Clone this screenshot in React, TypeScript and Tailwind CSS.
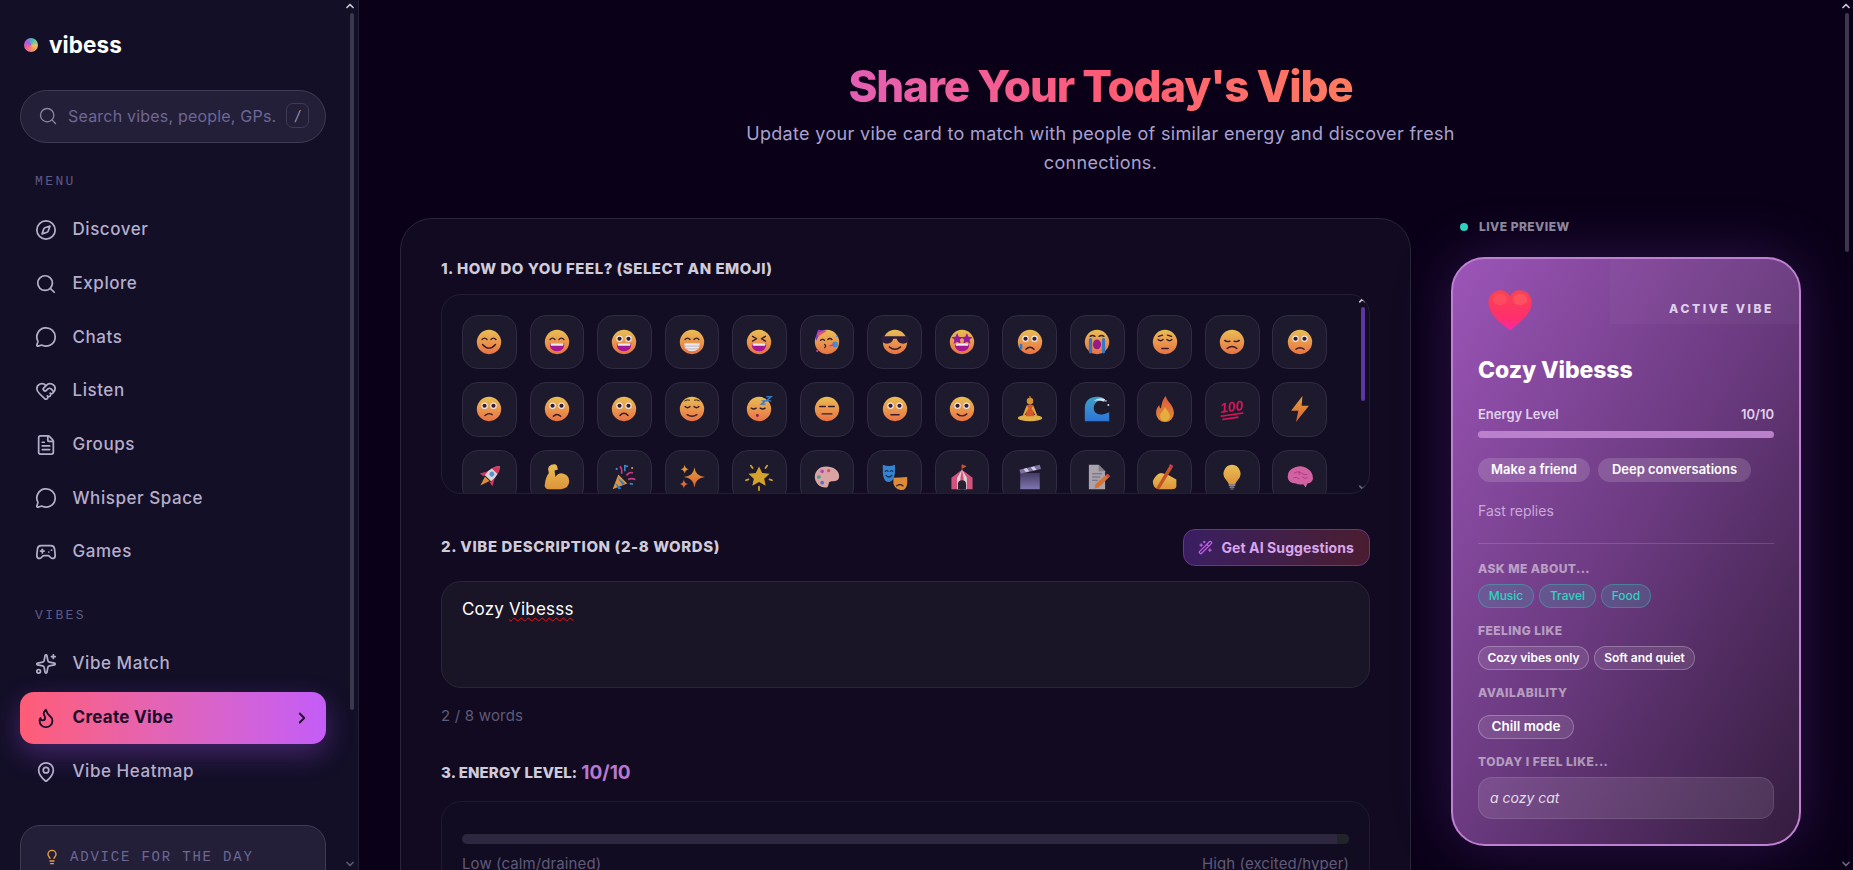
import React from "react";
import { Compass, Search, MessageCircle, HeartHandshake, FileText, Gamepad2, Sparkles, Flame, ChevronRight, ChevronUp, ChevronDown, MapPin, Lightbulb, WandSparkles } from "lucide-react";

const D = "#3a1c2c";
const S = (d: string, w = 1.7, c = D) => <path d={d} fill="none" stroke={c} strokeWidth={w} strokeLinecap="round" strokeLinejoin="round" />;
const happyEyes = S("M7.5 13q3-3.6 6 0M18.5 13q3-3.6 6 0");
const roundEyes = (<><circle cx="10.5" cy="12" r="4" fill="#fff" /><circle cx="21.5" cy="12" r="4" fill="#fff" /><circle cx="10.5" cy="12" r="2.6" fill={D} /><circle cx="21.5" cy="12" r="2.6" fill={D} /></>);
const open = (<><path d="M7 17.5h18q0 10-9 10t-9-10z" fill="#b5179e" /><path d="M8 17.5h16q0 2-.6 3.2h-14.800q-.6-1.200-.6-3.200z" fill="#fff" /></>);
const frown = S("M11 24q5-5.500 10 0");
const Face = ({ children }: { children: React.ReactNode }) => (<><circle cx="16" cy="16" r="15" fill="url(#faceG)" />{children}</>);

const EMOJI: Record<string, React.ReactNode> = {
  smile: <Face>{happyEyes}{S("M8 19q8 9 16 0")}</Face>,
  grin: <Face>{happyEyes}{open}</Face>,
  big: <Face>{roundEyes}{open}</Face>,
  teeth: <Face>{happyEyes}<path d="M6.500 17.500h19q0 10-9.500 10t-9.500-10z" fill="#fff" />{S("M7 21h18M9 24.500h14", 0.8, "#c9a0b0")}</Face>,
  squint: <Face>{S("M8 9l5 3-5 3M24 9l-5 3 5 3")}{open}</Face>,
  party: <Face><path d="M2 10L5 1l11 1C10 4 5 7 3 15z" fill="#8e44d8" /><path d="M4 5l8-3 3 1-10 6z" fill="#f2557e" />{S("M8 14q2.500-2.500 5 0M17 13q2.500-2.500 5 0")}{S("M13 23q3-2 0-4", 1.5)}<circle cx="26" cy="19" r="3.500" fill="#3aa0e8" /><path d="M19 21l6-2" stroke="#e74694" strokeWidth="2" /><circle cx="4" cy="27" r="1.300" fill="#e74694" /><circle cx="28" cy="9" r="1" fill="#3aa0e8" /></Face>,
  cool: <Face><path d="M-1 9h34v3q-1 6-7 6t-8-6h-4q-2 6-8 6t-7-6z" fill="#2d1f3f" />{S("M9 22q7 6 14 0")}</Face>,
  star: <Face><path d="M10 5l2 4.500 5 .5-3.700 3.300 1 4.900-4.300-2.500-4.300 2.500 1-4.900L3 10l5-.5zM22 5l2 4.500 5 .5-3.700 3.300 1 4.900-4.300-2.500-4.300 2.500 1-4.900-3.700-3.300 5-.5z" fill="#a21caf" />{open}</Face>,
  tear: <Face>{roundEyes}{S("M11 25q5-5 10 0")}<rect x="3.500" y="18" width="3" height="7" rx="1.500" fill="#2f7fe0" /></Face>,
  cry: <Face>{S("M7.500 9q3-2 6 0M18.500 9q3-2 6 0")}<rect x="6" y="11" width="4" height="19" rx="2" fill="#3a7fd8" /><rect x="22" y="11" width="4" height="19" rx="2" fill="#3a7fd8" /><ellipse cx="16" cy="19" rx="5" ry="6" fill="#a51a8f" /></Face>,
  pensive: <Face>{S("M8 9l5-1.500M24 9l-5-1.500")}{S("M7.500 13q3 3 6 0M18.500 13q3 3 6 0")}{S("M12 24h8")}</Face>,
  sad: <Face>{S("M7 14q3 2.500 6.500 1M25 14q-3 2.500-6.500 1")}{S("M10 24q6-5 12 0")}</Face>,
  worried: <Face>{roundEyes}{S("M11 25q5-4 10 0")}</Face>,
  confused: <Face>{roundEyes}{S("M11 24q5-4 9 -1")}</Face>,
  slightFrown: <Face>{roundEyes}{S("M11.500 25q4.500-4.500 9 0")}</Face>,
  frownFace: <Face>{roundEyes}{frown}</Face>,
  relieved: <Face>{S("M7 6q3-2 6-1M25 6q-3-2-6-1", 1.200)}{S("M7.500 13q3 3 6 0M18.500 13q3 3 6 0")}{S("M10 23q6 4 12 0")}</Face>,
  sleep: <Face>{S("M6.500 15q3 2 6 0M17.500 15q3 2 6 0")}<circle cx="14" cy="24" r="1.800" fill="#a5185f" /><path d="M19 6h5l-5 4h5M25 1h6l-6 5h6" fill="none" stroke="#3a86d8" strokeWidth="1.700" /></Face>,
  expressionless: <Face>{S("M7 13h7M18 13h7")}{S("M10 22h12")}</Face>,
  neutral: <Face>{roundEyes}{S("M11 23h10")}</Face>,
  slight: <Face>{roundEyes}{S("M10 22q6 5 12 0")}</Face>,
  yoga: (<><ellipse cx="16" cy="27" rx="15" ry="4" fill="#f7c04a" /><path d="M12.500 11q3.500-2 7 0l1.500 14H11z" fill="#e8602e" /><path d="M12 11.500L7 24l2 1 5-10zM20 11.500L25 24l-2 1-5-10z" fill="#f2b53f" /><circle cx="16" cy="6" r="4" fill="#e9a13a" /><circle cx="16" cy="1.300" r="1.300" fill="#b86a28" /></>),
  wave: (<><path d="M1 31V15C1 5 8 1 16 1c6 0 9 2 10 4-8-1-14 3-14 10 0 6 6 9 13 7 2 0 4-1 6-2v11z" fill="url(#waveG)" /><path d="M12 6q6-5 14-2l-1 3q-7-2-13-1z" fill="#f2f5fa" /><circle cx="27" cy="6" r="1" fill="#dfe8f5" /><circle cx="30" cy="11" r="1.200" fill="#dfe8f5" /></>),
  fire: (<><path d="M17 0c1 7 10 11 10 21a11 11 0 0 1-22 0c0-5 2-8 4-10 0 3 1 4 2 4 1-5 2-11 6-15z" fill="url(#fireG)" /><path d="M16 13c1 4 6 7 6 12a6 6 0 0 1-12 0c0-5 5-7 6-12z" fill="#fbbf3e" /></>),
  hundred: (<><text x="16" y="19" textAnchor="middle" fontFamily="Liberation Sans, sans-serif" fontWeight="900" fontStyle="italic" fontSize="17" fill="#f0145e" transform="rotate(-8 16 16)">100</text><path d="M2 25L30 21M4 29L24 26" stroke="#f0145e" strokeWidth="2" /></>),
  bolt: <path d="M19 0L5 18h9l-3 14 16-20h-9z" fill="url(#boltG)" />,
  rocket: (<g transform="rotate(45 16 16)"><path d="M16-3q7 8 6 21H10Q9 5 16-3z" fill="#ece7ee" /><path d="M16-3q4 4 5 9H11q1-5 5-9z" fill="#e83a63" /><circle cx="16" cy="11" r="3" fill="#5c9fdc" /><path d="M10 12l-5 9 6-1zM22 12l5 9-6-1z" fill="#e83a63" /><path d="M12 19h8l-4 12z" fill="#f1993b" /></g>),
  muscle: <path d="M9 1q5-2 7 1l1 5-4 1 1 8q4-6 10-4 7 2 7 9 0 9-10 10H5q-5-1-4-6 1-9 5-14L5 6q0-3 4-5z" fill="url(#bulbG)" />,
  tada: (<><path d="M2 31L9 13l11 11z" fill="#f1a33c" /><path d="M5 23l8 7-4 1zM8 16l9 8-3 2z" fill="#3a86d8" /><path d="M13 12q1-6-2-9M19 14q4-5 8-3M21 19q4-2 9 0" fill="none" stroke="#e83a90" strokeWidth="2" /><path d="M17 9V2l4 1" fill="none" stroke="#3aa0e8" strokeWidth="1.800" /><circle cx="26" cy="5" r="1.300" fill="#f1a33c" /><circle cx="7" cy="6" r="1.300" fill="#3aa0e8" /><path d="M23 24l4 1" stroke="#3aa0e8" strokeWidth="2" /></>),
  sparkles: <path d="M19 4q1 11 13 12-12 1-13 13-1-12-13-13 12-1 13-12zM7 1q.7 5 5 5.500-4.300.7-5 5.500-.7-4.800-5-5.500 4.300-.5 5-5.500zM6 19q.7 5 5 5.500-4.300.7-5 5.500-.7-4.800-5-5.500 4.300-.5 5-5.500z" fill="url(#boltG)" />,
  glow: (<><path d="M16 3l4 8 9 1-6.600 6 1.800 8.800-8.200-4.500-8.200 4.500 1.800-8.800L3 12l9-1z" fill="#e9b22c" /><path d="M16 28v4M6 2l2 3M26 2l-2 3M0 20l3-1M32 20l-3-1" stroke="#e9b22c" strokeWidth="2.200" strokeLinecap="round" /></>),
  palette: (<><path d="M15 3C6 3 1 9 1 16s6 13 13 13c5 0 3-5 5-7 3-2 12 1 12-7C31 8 24 3 15 3z" fill="#eeb3ae" /><circle cx="10" cy="9" r="2.300" fill="#c94fd0" /><circle cx="6" cy="16" r="2.300" fill="#3cb4a2" /><circle cx="10" cy="23" r="2.300" fill="#4f7fe0" /><circle cx="18" cy="8" r="2" fill="#e0557a" /></>),
  masks: (<><path d="M1 1q8 3 15 0v10q-2 11-8 11T1 11z" fill="#3a8fe0" />{S("M4 9q2-2 3.500 0M10 9q2-2 3.500 0", 1.400, "#123060")}{S("M5 14q3.500 4 7 0", 1.600, "#123060")}<path d="M14 17q8 0 17-1v8q-1 9-8 8t-9-8z" fill="#f1993b" />{S("M18 27q4-3 8 0", 1.500)}</>),
  circus: (<><path d="M16 7L3 17v14h26V17z" fill="#e65a85" /><path d="M16 7l-6 10v14h4V17zM16 7l6 10v14h-4V17z" fill="#f2e6ea" /><path d="M11 31v-6a5 5 0 0 1 10 0v6z" fill="#2a2233" /><path d="M16 8V1l5 2-5 2" fill="#e65a2c" stroke="#e65a2c" /></>),
  clapper: (<><rect x="4" y="11" width="24" height="20" fill="url(#clapG)" /><path d="M3 7l25-6 1.500 5-25 6z" fill="#8a7ab0" /><path d="M8 6l3 4 4-1-3-4zM17 4l3 4 4-1-3-4z" fill="#e8e4f0" /></>),
  memo: (<><path d="M6 1h12l8 8v22H6z" fill="#b9b2bc" /><path d="M18 1l8 8h-8z" fill="#8e8892" /><path d="M10 12h12M10 16h10M10 20h7" stroke="#78727e" strokeWidth="1.300" /><path d="M29 12l3 3-14 14-5 1 1-5z" fill="#ee7c30" /><path d="M29 12l3 3-2 2-3-3z" fill="#e0475a" /></>),
  writing: (<><path d="M1 21q4-9 10-10l8 2 11 6v8q0 4-6 4H8q-7-1-7-10z" fill="url(#bulbG)" /><path d="M5 30L21 3l4 2L9 31z" fill="#d65a2a" /><path d="M21 3l1-3 4 2-1 3z" fill="#e0475a" /></>),
  bulb: (<><path d="M16 1a11 11 0 0 0-7 19q3 3 3 5h8q0-2 3-5a11 11 0 0 0-7-19z" fill="url(#bulbG)" /><rect x="12" y="25" width="8" height="2" fill="#a8a3ab" /><rect x="13" y="27.500" width="6" height="2" fill="#8d8891" /><rect x="14" y="30" width="4" height="1.500" fill="#78747c" /></>),
  brain: (<><path d="M1 17Q0 7 10 4q8-3 14 1 8 4 8 13-1 5-7 6l-2 5-3-4q-6 1-9-1-9 0-10-7z" fill="#e76bb0" />{S("M9 11q4-3 8 0t8 2M8 17q4-2 7 1M19 16q3 3 6 1M15 9v4", 1.100, "#b94187")}</>),
};

const rows = ["smile","grin","big","teeth","squint","party","cool","star","tear","cry","pensive","sad","worried","confused","slightFrown","frownFace","relieved","sleep","expressionless","neutral","slight","yoga","wave","fire","hundred","bolt","rocket","muscle","tada","sparkles","glow","palette","masks","circus","clapper","memo","writing","bulb","brain"];

const Defs = () => (
  <svg width="0" height="0" className="absolute">
    <defs>
      <linearGradient id="faceG" x1="0" y1="0" x2="0" y2="1"><stop offset="0" stopColor="#ffd058" /><stop offset="1" stopColor="#ff7c48" /></linearGradient>
      <linearGradient id="waveG" x1="0" y1="0" x2="0" y2="1"><stop offset="0" stopColor="#43b0d8" /><stop offset="1" stopColor="#2f7fe8" /></linearGradient>
      <linearGradient id="fireG" x1="0" y1="0" x2="0" y2="1"><stop offset="0" stopColor="#f0633c" /><stop offset="1" stopColor="#f59a3b" /></linearGradient>
      <linearGradient id="boltG" x1="0" y1="0" x2="0" y2="1"><stop offset="0" stopColor="#fbb040" /><stop offset="1" stopColor="#ee6a35" /></linearGradient>
      <linearGradient id="clapG" x1="0" y1="0" x2="0" y2="1"><stop offset="0" stopColor="#4a4068" /><stop offset="1" stopColor="#8a80c0" /></linearGradient>
      <linearGradient id="bulbG" x1="0" y1="0" x2="0" y2="1"><stop offset="0" stopColor="#ffd05a" /><stop offset="1" stopColor="#f3a23c" /></linearGradient>
      <linearGradient id="heartG" x1="0" y1="0" x2="0" y2="1"><stop offset="0" stopColor="#fb4250" /><stop offset="0.7" stopColor="#ff2f6e" /><stop offset="1" stopColor="#ff28a8" /></linearGradient>
    </defs>
  </svg>
);

const NavItem = ({ icon: Icon, label }: { icon: React.ElementType; label: string }) => (
  <div className="flex h-[52px] items-center gap-[15.500px] pl-[15px] text-[17px] font-medium tracking-[0.55px] text-[#b5aecb]">
    <Icon size={22} strokeWidth={1.9} />
    <span>{label}</span>
  </div>
);

const SectionLabel = ({ children, cls = "tracking-[0.5px]" }: { children: React.ReactNode; cls?: string }) => (
  <h3 className={`text-[15px] font-extrabold uppercase text-[#cfcbdb] ${cls}`}>{children}</h3>
);

const Chip = ({ children, cls }: { children: React.ReactNode; cls: string }) => (
  <span className={`inline-flex h-[24px] items-center rounded-full border ${cls}`}>{children}</span>
);

const PLabel = ({ children }: { children: React.ReactNode }) => (
  <div className="text-[12px] font-extrabold uppercase leading-[16px] tracking-[0.45px] text-[#ffffff]/50">{children}</div>
);

export default function App() {
  return (
    <div className="flex h-screen w-full overflow-hidden bg-[#0a0118] font-['Inter',sans-serif] text-white">
      <Defs />
      <aside className="relative h-full w-[359px] shrink-0 overflow-hidden border-r border-[#24203a] bg-[#130f27] pl-[20px] pr-[32px]">
        <div className="flex h-[90px] items-center gap-[11px] pl-[4px]">
          <span className="size-[14px] rounded-full bg-[conic-gradient(from_240deg,#f05f9a,#a060e0,#40c8b0,#f0c060,#f0905f,#f05f9a)]" />
          <span className="text-[22.500px] font-bold tracking-[0.1px]">vibess</span>
        </div>
        <div className="flex h-[53px] items-center rounded-full border border-[#3f3b52] bg-[#231f38] pb-[2px] pl-[17px] pr-[16px]">
          <Search size={20} strokeWidth={1.6} className="shrink-0 text-[#8c87a5]" />
          <span className="ml-[10px] flex-1 truncate text-[16px] tracking-[0.2px] text-[#6c6794]">Search vibes, people, GPs.</span>
          <span className="flex h-[25px] w-[23px] shrink-0 items-center justify-center rounded-[7px] border border-[#3f3b52] text-[14px] italic text-[#9a96ae]">/</span>
        </div>
        <div className="mt-[30px] pl-[15px] font-['Liberation_Mono',monospace] text-[13px] leading-[18px] tracking-[2.400px] text-[#5f5a85]">MENU</div>
        <nav className="mt-[13px] flex flex-col gap-[1.700px]">
          <NavItem icon={Compass} label="Discover" />
          <NavItem icon={Search} label="Explore" />
          <NavItem icon={MessageCircle} label="Chats" />
          <NavItem icon={HeartHandshake} label="Listen" />
          <NavItem icon={FileText} label="Groups" />
          <NavItem icon={MessageCircle} label="Whisper Space" />
          <NavItem icon={Gamepad2} label="Games" />
        </nav>
        <div className="mt-[29px] pl-[15px] font-['Liberation_Mono',monospace] text-[13px] leading-[18px] tracking-[2.400px] text-[#5f5a85]">VIBES</div>
        <nav className="mt-[12.500px] flex flex-col gap-[2px]">
          <NavItem icon={Sparkles} label="Vibe Match" />
          <div className="flex h-[52px] items-center gap-[15.500px] rounded-[14px] bg-gradient-to-r from-[#ff5c75] to-[#c45cf8] pl-[15px] pr-[15px] text-[17px] font-bold tracking-[0.3px] text-[#1a0c2a] shadow-[0_10px_28px_rgba(168,85,247,0.32)]">
            <Flame size={22} strokeWidth={2} />
            <span className="flex-1">Create Vibe</span>
            <ChevronRight size={18} strokeWidth={2.400} />
          </div>
          <NavItem icon={MapPin} label="Vibe Heatmap" />
        </nav>
        <div className="mt-[27px] h-[120px] rounded-[20px] border border-[#3f3b52] bg-[#231f38] pl-[23px] pt-[21px]">
          <div className="flex items-center gap-[10px]">
            <Lightbulb size={16} strokeWidth={2} className="text-[#f0a040]" />
            <span className="font-['Liberation_Mono',monospace] text-[14px] tracking-[1.800px] text-[#6c6794]">ADVICE FOR THE DAY</span>
          </div>
        </div>
        <div className="absolute right-[4px] top-[13px] h-[697px] w-[4px] rounded-full bg-[#3b374c]" />
        <ChevronUp size={12} strokeWidth={3.500} className="absolute right-[2px] top-0 text-[#c9c6d2]" />
        <ChevronDown size={12} strokeWidth={3.500} className="absolute bottom-0 right-[2px] text-[#5c5968]" />
      </aside>

      <main className="relative h-full flex-1 overflow-hidden pl-[41px] pr-[52px]">
        <header className="flex flex-col items-center pt-[53px]">
          <h1 className="bg-gradient-to-r from-[#e35fb4] via-[#ff5a76] to-[#ff7a5e] bg-clip-text text-[44px] font-extrabold leading-[66px] tracking-[-1.200px] text-transparent">Share Your Today's Vibe</h1>
          <p className="mt-[1px] w-[730px] text-center text-[18px] leading-[28.800px] tracking-[0.330px] text-[#a9a2cf]">Update your vibe card to match with people of similar energy and discover fresh connections.</p>
        </header>
        <div className="mt-[40px] flex gap-[40px]">
          <section className="flex h-[700px] flex-1 flex-col rounded-[32px] border border-[#2a2538] bg-[#110a20] px-[40px] pt-[39px]">
            <SectionLabel>1. How do you feel? (Select an emoji)</SectionLabel>
            <div className="relative mt-[14px] h-[200px] shrink-0 overflow-hidden rounded-[20px] border border-[#231e33] bg-[#130d24] pl-[20px] pr-[42px] pt-[19.500px]">
              <div className="grid grid-cols-[repeat(13,1fr)] gap-[12.800px]">
                {rows.map((name) => (
                  <div key={name} className="flex aspect-square items-center justify-center rounded-[16px] border border-[#302b41] bg-[#1e1a2e]">
                    <svg viewBox="0 0 32 32" className="size-[26px] overflow-visible opacity-[0.9]">{EMOJI[name]}</svg>
                  </div>
                ))}
              </div>
              <div className="absolute right-[4px] top-[12px] h-[94px] w-[4px] rounded-full bg-[#5e36a0]" />
              <ChevronUp size={11} strokeWidth={3.500} className="absolute right-[1px] top-0 text-[#c9c6d2]" />
              <ChevronDown size={11} strokeWidth={3.500} className="absolute bottom-0 right-[1px] text-[#6a6778]" />
            </div>
            <div className="mt-[35px] flex h-[37px] items-center justify-between">
              <SectionLabel cls="tracking-[0.6px]">2. Vibe description (2-8 words)</SectionLabel>
              <div className="flex h-[37px] items-center gap-[8px] rounded-[12px] border border-[#6a3590] bg-gradient-to-r from-[#3a1e62] to-[#4a1c30] pl-[14px] pr-[15px] text-[14px] font-bold tracking-[0.1px] text-[#d9a6ec]">
                <WandSparkles size={15} className="text-[#c060e8]" />
                <span>Get AI Suggestions</span>
              </div>
            </div>
            <div className="mt-[15px] h-[107px] shrink-0 rounded-[20px] border border-[#2a2538] bg-[#191426] pl-[20px] pt-[15px] text-[17px] leading-[24px] tracking-[0.2px]">
              Cozy <span className="underline decoration-[#f01010] decoration-wavy decoration-1 underline-offset-2">Vibesss</span>
            </div>
            <div className="mt-[17px] text-[15px] leading-[22px] tracking-[0.2px] text-[#5f5a78]">2 / 8 words</div>
            <div className="mt-[33px] flex h-[26px] items-center gap-[4px]">
              <SectionLabel cls="tracking-[0.1px]">3. Energy level:</SectionLabel>
              <span className="text-[19px] font-bold text-[#b878d0]">10/10</span>
            </div>
            <div className="mt-[15px] flex-1 rounded-[20px] border border-[#1f1a2e] bg-[#120c22] px-[20px] pt-[32px]">
              <div className="relative h-[10px] overflow-hidden rounded-full bg-[#2d2740]">
                <div className="absolute right-0 top-0 h-[10px] w-[12px] bg-[#22242a]" />
              </div>
              <div className="mt-[9px] flex justify-between text-[15px] tracking-[0.1px] text-[#5f5a78]">
                <span>Low (calm/drained)</span>
                <span>High (excited/hyper)</span>
              </div>
            </div>
          </section>

          <aside className="w-[350px] shrink-0 pt-[1px]">
            <div className="flex h-[17px] items-center gap-[11px] pl-[9px]">
              <span className="size-[8px] rounded-full bg-[#2dd4bf]" />
              <span className="text-[12px] font-extrabold tracking-[0.45px] text-[#8d8a9b]">LIVE PREVIEW</span>
            </div>
            <div className="relative mt-[21px] h-[589px] overflow-hidden rounded-[34px] border-2 border-[#be80d0] bg-gradient-to-br from-[#9c55b8] via-[#6b3a80] to-[#341c3e] px-[25px] pt-[28px] shadow-[0_0_60px_rgba(168,85,247,0.22)]">
              <div className="absolute right-0 top-0 h-[65px] w-[189px] bg-white/[0.03]" />
              <div className="relative flex h-[44px] items-center justify-between">
                <svg viewBox="0 0 32 32" className="ml-[9px] mt-[4px] size-[46px]">
                  <path d="M16 29.500C8 23 1 17.500 1 10 1 5 5 1.500 9.500 1.500 12.500 1.500 15 3.500 16 6 17 3.500 19.500 1.500 22.500 1.500 27 1.500 31 5 31 10 31 17.500 24 23 16 29.500z" fill="url(#heartG)" />
                  <ellipse cx="23" cy="8" rx="5" ry="4" fill="#ff7a6a" opacity="0.35" />
                  <ellipse cx="9" cy="8" rx="5" ry="4" fill="#ff7a6a" opacity="0.25" />
                </svg>
                <span className="text-[12px] font-extrabold tracking-[2.600px] text-[#e0cfea]">ACTIVE VIBE</span>
              </div>
              <div className="mt-[22px] text-[23px] font-extrabold leading-[34px] tracking-[-0.1px]">Cozy Vibesss</div>
              <div className="mt-[18px] flex justify-between text-[13px] font-semibold leading-[18px] text-[#e2d0ec]">
                <span>Energy Level</span><span>10/10</span>
              </div>
              <div className="mt-[8px] h-[7px] rounded-full bg-[#bb80cc]" />
              <div className="mt-[20px] flex gap-[8px]">
                <span className="flex h-[24px] w-[112px] items-center justify-center rounded-full bg-white/15 text-[13px] font-semibold">Make a friend</span>
                <span className="flex h-[24px] w-[153px] items-center justify-center rounded-full bg-white/15 text-[13px] font-semibold">Deep conversations</span>
              </div>
              <div className="mt-[19px] text-[14px] leading-[20px] text-[#c9a9d8]">Fast replies</div>
              <div className="mt-[22px] h-px bg-white/15" />
              <div className="mt-[17px]"><PLabel>Ask me about...</PLabel></div>
              <div className="mt-[7px] flex gap-[5px]">
                <Chip cls="w-[56px] justify-center border-[#2dd4bf]/35 bg-[#4a8aa0]/30 text-[12px] font-medium text-[#2dd4bf]">Music</Chip>
                <Chip cls="w-[57px] justify-center border-[#2dd4bf]/35 bg-[#4a8aa0]/30 text-[12px] font-medium text-[#2dd4bf]">Travel</Chip>
                <Chip cls="w-[50px] justify-center border-[#2dd4bf]/35 bg-[#4a8aa0]/30 text-[12px] font-medium text-[#2dd4bf]">Food</Chip>
              </div>
              <div className="mt-[15px]"><PLabel>Feeling like</PLabel></div>
              <div className="mt-[7px] flex gap-[5px]">
                <Chip cls="w-[111px] justify-center border-white/25 bg-white/10 text-[12px] font-semibold">Cozy vibes only</Chip>
                <Chip cls="w-[101px] justify-center border-white/25 bg-white/10 text-[12px] font-semibold">Soft and quiet</Chip>
              </div>
              <div className="mt-[15px]"><PLabel>Availability</PLabel></div>
              <div className="mt-[14px] flex">
                <Chip cls="w-[96px] justify-center border-white/25 bg-white/10 text-[13.500px] font-semibold">Chill mode</Chip>
              </div>
              <div className="mt-[15px]"><PLabel>Today I feel like...</PLabel></div>
              <div className="mt-[7px] flex h-[42px] items-center rounded-[14px] border border-white/10 bg-white/10 pl-[11px] text-[14px] italic text-[#e6dcea]">a cozy cat</div>
            </div>
          </aside>
        </div>
        <div className="absolute right-[4px] top-[13px] h-[239px] w-[4px] rounded-full bg-[#3b374c]" />
        <ChevronUp size={12} strokeWidth={3.500} className="absolute right-[1px] top-0 text-[#c9c6d2]" />
        <ChevronDown size={12} strokeWidth={3.500} className="absolute bottom-0 right-[1px] text-[#6a6778]" />
      </main>
    </div>
  );
}
